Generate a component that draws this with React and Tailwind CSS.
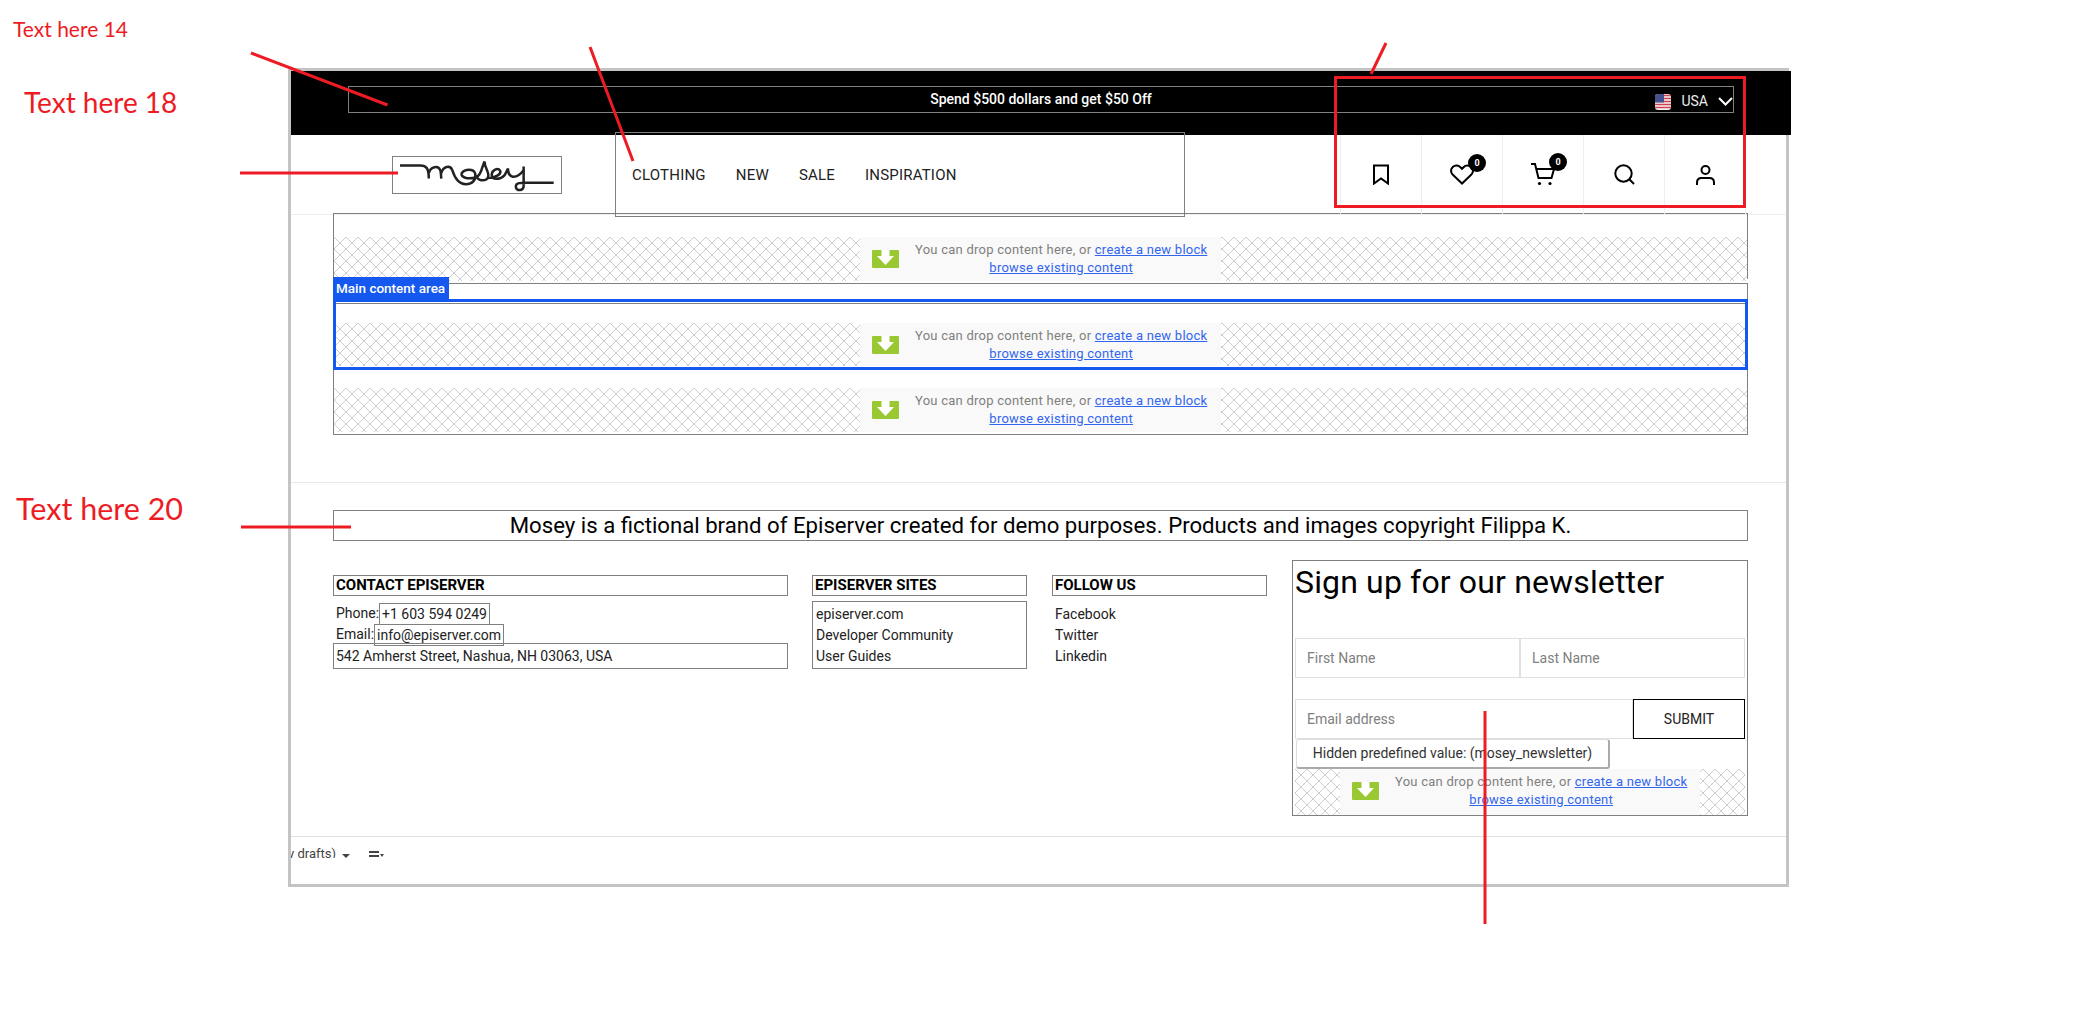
function Lattice({ id }) {
  return (
    <svg className="absolute inset-0 h-full w-full" aria-hidden="true">
      <defs>
        <pattern id={id} width="12" height="12" patternUnits="userSpaceOnUse">
          <path d="M0 0L12 12M12 0L0 12" stroke="#cccccc" strokeWidth="1" fill="none" shapeRendering="crispEdges" />
        </pattern>
      </defs>
      <rect width="100%" height="100%" fill={`url(#${id})`} />
    </svg>
  )
}

function GreenArrow() {
  return (
    <div className="flex h-[18px] w-[27px] shrink-0 items-start justify-center rounded-[1px] bg-[#9ac832]">
      <svg width="17" height="15" viewBox="0 0 17 15">
        <path d="M4.500 0h8v6H17l-8.500 9L0 6h4.500z" fill="#fff" />
      </svg>
    </div>
  )
}

function DropZone({ id, height, panelWidth }) {
  return (
    <div className={`relative flex justify-center ${height} bg-white`}>
      <Lattice id={id} />
      <div className={`relative flex ${panelWidth} bg-[#f9f9f9] pl-3 text-[13px] leading-[18px] tracking-[0.25px]`}>
        <div className="pt-[13px]">
          <GreenArrow />
        </div>
        <div className="ml-4 pt-1 text-center whitespace-nowrap text-[#808080]">
          <div>
            You can drop content here, or <a className="text-[#3366ee] underline">create a new block</a>
          </div>
          <a className="text-[#3366ee] underline">browse existing content</a>
        </div>
      </div>
    </div>
  )
}

function Badge() {
  return (
    <span className="absolute -top-[10px] -right-[12px] flex h-[18px] w-[18px] items-center justify-center rounded-full bg-black text-[9px] leading-none font-bold text-white">
      0
    </span>
  )
}

const iconProps = { fill: 'none', stroke: '#000', strokeWidth: 2 }

function HeaderIcons() {
  const cell = 'flex h-full w-[81px] items-center justify-center border-l border-[#eeeeee]'
  return (
    <div className="ml-auto flex h-full border-r border-[#eeeeee]">
      <div className={cell}>
        <svg width="18" height="21" viewBox="0 0 18 21" {...iconProps}>
          <path d="M2 1.500h14v18l-7-5-7 5z" />
        </svg>
      </div>
      <div className={cell}>
        <div className="relative">
          <svg className="block" width="24" height="21" viewBox="0 0 24 21" {...iconProps}>
            <path d="M12 19.500L2.600 10.600C.4 8.400.6 4.800 2.800 2.900 5 1 8.400 1.200 10.400 3.200L12 4.800l1.600-1.600c2-2 5.400-2.200 7.600-.3 2.200 1.900 2.400 5.500.2 7.700z" />
          </svg>
          <Badge />
        </div>
      </div>
      <div className={cell}>
        <div className="relative">
          <svg className="block" width="24" height="23" viewBox="0 0 24 23" {...iconProps}>
            <path d="M0 1h4l3.500 14h13L23 6H6" />
            <circle cx="8.500" cy="20.500" r="1.600" fill="#000" stroke="none" />
            <circle cx="19" cy="20.500" r="1.600" fill="#000" stroke="none" />
          </svg>
          <Badge />
        </div>
      </div>
      <div className={cell}>
        <svg width="21" height="21" viewBox="0 0 21 21" {...iconProps}>
          <circle cx="9.500" cy="9.500" r="8.200" />
          <path d="M15.500 15.500l4.500 4.500" />
        </svg>
      </div>
      <div className={cell}>
        <svg width="19" height="20" viewBox="0 0 19 20" {...iconProps}>
          <circle cx="9.500" cy="5" r="4" />
          <path d="M1 20v-2.500C1 14.500 3 13 5.500 13h8c2.500 0 4.500 1.500 4.500 4.500V20" />
        </svg>
      </div>
    </div>
  )
}

function Flag() {
  return (
    <svg width="16" height="16" viewBox="0 0 16 16" className="rounded-[3px]">
      <rect width="16" height="16" fill="#f4f4f4" />
      <path d="M0 1.500h16M0 4.500h16M0 7.500h16M0 10.500h16M0 13.500h16" stroke="#cf3f4c" strokeWidth="1.500" />
      <rect width="9" height="8.500" fill="#45508f" />
    </svg>
  )
}

function MoseyLogo() {
  return (
    <svg className="h-full w-full" viewBox="67 48 508 115" fill="none" stroke="#222" strokeWidth="8">
      <path d="M75 75H140C160 75 167 85 167 117" />
      <path d="M167 100C172 78 200 72 205 95L207 117" />
      <path d="M207 100C212 78 235 72 242 90C250 115 262 135 285 135C308 135 320 118 315 100C310 85 282 85 272 100C268 112 290 122 320 112C335 105 335 85 345 62C345 85 365 100 355 115C350 125 330 125 322 115" />
      <path d="M355 115C375 115 400 105 395 92C388 80 368 90 368 105C368 122 395 122 410 105L420 85C420 115 445 122 470 90" />
      <path d="M470 78V140C470 158 445 158 445 142C445 130 460 130 480 130H566" />
    </svg>
  )
}

function FooterHead({ children }) {
  return (
    <div className="h-[21px] border border-[#808080] pl-[2px] text-[15px] leading-[19px] font-bold text-black">
      {children}
    </div>
  )
}

export default function App() {
  return (
    <div className="relative h-[1017px] w-[2100px] overflow-hidden bg-white font-['Roboto',sans-serif] text-[14px] text-[#222]">
      <div className="ml-[288px] pt-[68px]">
        <div className="h-[819px] w-[1501px] border-[3px] border-[#c4c4c4]">
          {/* top bar */}
          <div className="mr-[-5px] h-[64px] bg-black pt-[15px]">
            <div className="relative ml-[57px] flex h-[27px] w-[1386px] items-center justify-center border border-[#808080] text-[14px] font-medium text-white">
              Spend $500 dollars and get $50 Off
              <div className="absolute top-[4px] right-[0px] flex items-center text-[#eeeeee]">
                <Flag />
                <span className="ml-[10px] text-[14px] font-normal">USA</span>
                <svg className="ml-[10px]" width="15" height="9" viewBox="0 0 15 9" fill="none" stroke="#fff" strokeWidth="2">
                  <path d="M1 1l6.500 6.500L14 1" />
                </svg>
              </div>
            </div>
          </div>

          {/* header */}
          <div className="flex h-[80px] items-center border-b border-[#eeeeee] pr-[40px]">
            <div className="ml-[101px] h-[38px] w-[170px] border border-[#808080]">
              <MoseyLogo />
            </div>
            <nav className="-my-[3px] ml-[53px] flex h-[85px] w-[570px] gap-[30px] border border-[#808080] pt-[34px] pl-[16px] text-[15px] leading-[16px] tracking-[0.2px] text-[#222]">
              <span>CLOTHING</span>
              <span>NEW</span>
              <span>SALE</span>
              <span>INSPIRATION</span>
            </nav>
            <HeaderIcons />
          </div>

          {/* content areas */}
          <div className="mt-[-2px] ml-[42px] h-[66px] w-[1415px] border border-[#808080] pt-[23px]">
            <DropZone id="lat1" height="h-[44px]" panelWidth="w-[361px]" />
          </div>
          <div className="relative mt-[4px] ml-[42px] h-[152px] w-[1415px] border border-[#808080]">
            <span className="absolute -top-[7px] -left-[1px] z-10 flex h-[22px] w-[116px] items-center bg-[#1558f0] pl-[3px] text-[13.5px] font-medium text-white">
              Main content area
            </span>
            <div className="absolute top-[19px] -left-[1px] h-[62px] w-[1415px] border border-[#808080]" />
            <div className="absolute top-[15px] -left-[1px] z-10 h-[71px] w-[1415px] border-[3px] border-[#1558f0]" />
            <div className="mt-[39px]">
              <DropZone id="lat2" height="h-[43px]" panelWidth="w-[361px]" />
            </div>
            <div className="mt-[22px]">
              <DropZone id="lat3" height="h-[44px]" panelWidth="w-[361px]" />
            </div>
          </div>

          {/* footer */}
          <div className="mt-[47px] border-t border-[#e8e8e8] pt-[27px]">
            <div className="ml-[42px] flex h-[31px] w-[1415px] items-center justify-center border border-[#808080] text-[22.2px] text-black">
              Mosey is a fictional brand of Episerver created for demo purposes. Products and images copyright Filippa K.
            </div>
            <div className="mt-[19px] ml-[42px] flex h-[257px] w-[1415px] items-start">
              <div className="mt-[15px] w-[455px]">
                <FooterHead>CONTACT EPISERVER</FooterHead>
                <div className="mt-[7px] flex h-[21px] items-center pl-[3px]">
                  Phone:<span className="border border-[#808080] px-[2px] leading-[20px]">+1 603 594 0249</span>
                </div>
                <div className="flex h-[21px] items-center pl-[3px]">
                  Email:<span className="border border-[#808080] px-[2px] leading-[20px]">info@episerver.com</span>
                </div>
                <div className="-mt-[2px] h-[26px] border border-[#808080] pl-[2px] leading-[24px]">542 Amherst Street, Nashua, NH 03063, USA</div>
              </div>
              <div className="mt-[15px] ml-[24px] w-[215px]">
                <FooterHead>EPISERVER SITES</FooterHead>
                <div className="mt-[5px] h-[68px] border border-[#808080] pl-[3px] leading-[21px]">
                  <div className="pt-[2px]">episerver.com</div>
                  <div>Developer Community</div>
                  <div>User Guides</div>
                </div>
              </div>
              <div className="mt-[15px] ml-[25px] w-[215px]">
                <FooterHead>FOLLOW US</FooterHead>
                <div className="mt-[8px] pl-[3px] leading-[21px]">
                  <div>Facebook</div>
                  <div>Twitter</div>
                  <div>Linkedin</div>
                </div>
              </div>
              <div className="ml-[25px] h-[256px] w-[456px] border border-[#808080] pl-[2px]">
                <h2 className="text-[32px] leading-[42px] tracking-[0.15px] text-black">Sign up for our newsletter</h2>
                <div className="mt-[35px] flex h-[40px] w-[450px] text-[#808080]">
                  <div className="flex w-[225px] items-center border border-[#e0e0e0] pl-[11px]">First Name</div>
                  <div className="flex w-[225px] items-center border border-[#e0e0e0] pl-[11px]">Last Name</div>
                </div>
                <div className="mt-[21px] flex h-[40px] w-[450px]">
                  <div className="flex w-[338px] items-center border border-[#e0e0e0] pl-[11px] text-[#808080]">Email address</div>
                  <div className="flex w-[112px] items-center justify-center border border-black text-[#222]">SUBMIT</div>
                </div>
                <div className="ml-[1px] flex h-[30px] w-[314px] items-center justify-center rounded-[3px] border border-r-2 border-b-2 border-[#dddddd] border-r-[#aaaaaa] border-b-[#aaaaaa] text-[#333]">
                  Hidden predefined value: (mosey_newsletter)
                </div>
                <div className="w-[450px]">
                  <DropZone id="lat4" height="h-[46px]" panelWidth="w-[360px]" />
                </div>
              </div>
            </div>
          </div>

          {/* bottom toolbar */}
          <div className="mt-[19px] flex h-[22px] items-start overflow-hidden border-t border-[#e0e0e0] text-[13px] leading-[16px] text-[#444]">
            <div className="mt-[9px] flex w-[45px] justify-end overflow-hidden whitespace-nowrap">y drafts)</div>
            <span className="mt-[17px] ml-[6px] h-0 w-0 border-x-[4px] border-t-[4px] border-x-transparent border-t-[#444]" />
            <div className="mt-[14px] ml-[19px] flex items-end">
              <div className="h-[6px] w-[10px] border-y-2 border-[#444]" />
              <span className="ml-[1px] h-0 w-0 border-x-[2px] border-t-[3px] border-x-transparent border-t-[#444]" />
            </div>
          </div>
        </div>
      </div>

      {/* annotations */}
      <div className="absolute top-[16px] left-[13px] font-['Lato',sans-serif] text-[21px] leading-[26px] text-[#ed1c24]">Text here 14</div>
      <div className="absolute top-[85px] left-[24px] font-['Lato',sans-serif] text-[28px] leading-[34px] text-[#ed1c24]">Text here 18</div>
      <div className="absolute top-[490px] left-[16px] font-['Lato',sans-serif] text-[30.5px] leading-[36px] text-[#ed1c24]">Text here 20</div>
      <div className="absolute top-[76px] left-[1334px] h-[132px] w-[412px] border-[3px] border-[#ed1c24]" />
      <svg className="absolute inset-0" width="2100" height="1017" fill="none" stroke="#ed1c24" strokeWidth="3">
        <path d="M251 53L387.500 105" />
        <path d="M590 47L633 161" />
        <path d="M240 173H398" />
        <path d="M1386 43L1371 74" />
        <path d="M241 527H351" />
        <path d="M1485 711V924" />
      </svg>
    </div>
  )
}
